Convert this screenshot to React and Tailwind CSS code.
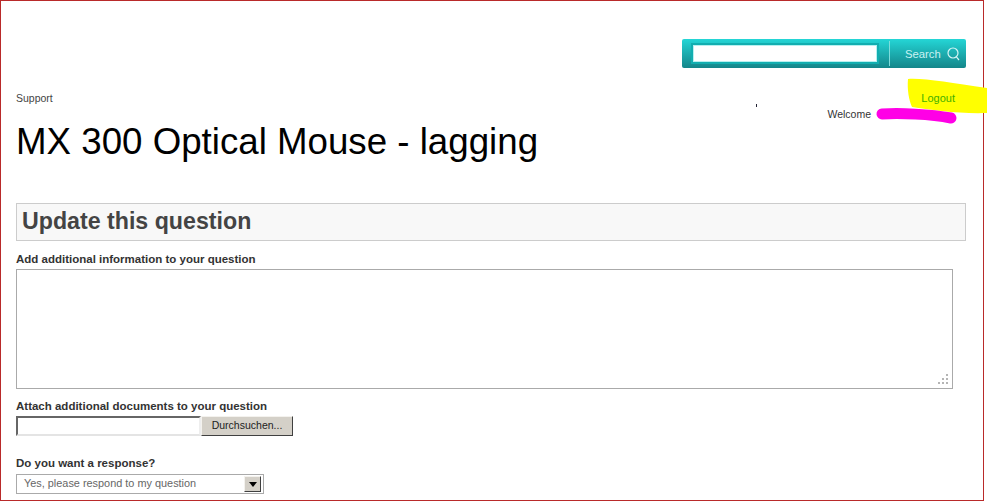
import React from 'react';

const App = () => {
  return (
    <div className="relative w-[987px] h-[501px] bg-white font-['Liberation_Sans',Arial,sans-serif]">
      <div className="w-[984px] h-[501px] border border-[#b92a2a] overflow-hidden">
        {/* search bar */}
        <div className="flex justify-end pt-[38px] pr-[16px]">
          <div className="flex items-center w-[284px] h-[29px] mr-px rounded-[2px] bg-gradient-to-b from-[#24d6d6] to-[#14868a]">
            <div className="ml-[9px] w-[188px] h-[21px] border-[2px] border-[#12aeb0] bg-white">
              <div className="h-full border border-[#b8f0f0]" />
            </div>
            <div className="ml-[10px] w-px h-[25px] bg-[#7fdcdc]" />
            <div className="flex items-center ml-[15px] gap-[6px] text-[11.3px] text-[#c9f2f2]">
              <span className="mt-[1px]">Search</span>
              <svg width="13" height="14" viewBox="0 0 13 14" fill="none" stroke="#d5f5f5" strokeWidth="1.2">
                <circle cx="6" cy="6" r="5" />
                <path d="M9.4 9.8 L12 13" />
              </svg>
            </div>
          </div>
        </div>

        {/* support + welcome */}
        <div className="flex justify-between pl-[15px] pr-[27px] mt-[23px]">
          <div className="text-[10.5px] leading-[13px] text-[#444] mt-[1px]">Support</div>
          <div className="relative z-10 text-right text-[10.5px] leading-[13px]">
            <div className="text-[#44b000] text-[11px] mt-[1px] mr-[1px]">Logout</div>
            <div className="text-[#333] mt-[3px] pr-[85px]">Welcome</div>
          </div>
        </div>

        {/* title */}
        <h1 className="pl-[15px] text-[36.7px] leading-[42px] text-black">MX 300 Optical Mouse - lagging</h1>

        {/* update box */}
        <div className="ml-[15px] mt-[40px] w-[950px] h-[38px] border border-[#ccc] bg-[#f8f8f8] pl-[5px] text-[23.2px] leading-[34px] font-bold text-[#444]">
          Update this question
        </div>

        <form className="pl-[15px]">
          <label className="block mt-[12px] text-[11.5px] leading-[13px] font-bold text-[#333]">
            Add additional information to your question
          </label>
          <div className="relative mt-[3px] w-[937px] h-[120px] border border-[#aaa] bg-white">
            <svg className="absolute right-[3px] bottom-[4px]" width="11" height="10" viewBox="0 0 11 10" fill="#b5b5b5">
              <rect x="8" y="0" width="2" height="2" />
              <rect x="4" y="4" width="2" height="2" />
              <rect x="8" y="4" width="2" height="2" />
              <rect x="0" y="8" width="2" height="2" />
              <rect x="4" y="8" width="2" height="2" />
              <rect x="8" y="8" width="2" height="2" />
            </svg>
          </div>

          <label className="block mt-[11px] text-[11.5px] leading-[13px] font-bold text-[#333]">
            Attach additional documents to your question
          </label>
          <div className="flex mt-[3px]">
            <div className="w-[185px] h-[20px] border-[2px] border-t-[#666] border-l-[#666] border-r-[#eee] border-b-[#e4e4e4] bg-white" />
            <button type="button" className="w-[92px] h-[20px] bg-[#d4d0c8] border border-t-[#f4f2ee] border-l-[#f4f2ee] border-r-[#404040] border-b-[#404040] text-[10.5px] text-[#222]">
              Durchsuchen...
            </button>
          </div>

          <label className="block mt-[21px] text-[11.5px] leading-[13px] font-bold text-[#333]">
            Do you want a response?
          </label>
          <div className="flex items-center justify-between mt-[4px] w-[248px] h-[20px] border border-[#aaa] bg-white pl-[7px] pr-[2px] text-[10.9px] text-[#666]">
            <span className="-mt-[1px]">Yes, please respond to my question</span>
            <div className="flex items-center justify-center w-[17px] h-[16px] bg-[#d4d0c8] border border-t-[#f4f2ee] border-l-[#f4f2ee] border-r-[#404040] border-b-[#404040]">
              <svg width="8" height="5" viewBox="0 0 8 5" fill="#000">
                <path d="M0 0 H8 L4 5 Z" />
              </svg>
            </div>
          </div>
        </form>
      </div>

      {/* hand-drawn marks on top of the screenshot */}
      <svg className="absolute left-0 top-0" width="987" height="501" viewBox="0 0 987 501">
        <path d="M908 79 C925 78 950 83 987 88 L987 113 C960 114 930 110 912 107 C909 100 907 90 908 79 Z" fill="#ffff00" />
        <path d="M882 114 C900 113 930 114 951 118" fill="none" stroke="#ff00e6" strokeWidth="11" strokeLinecap="round" />
      </svg>
      <div className="absolute left-[756px] top-[104px] w-px h-[3px] bg-[#223]" />
    </div>
  );
};

export default App;
